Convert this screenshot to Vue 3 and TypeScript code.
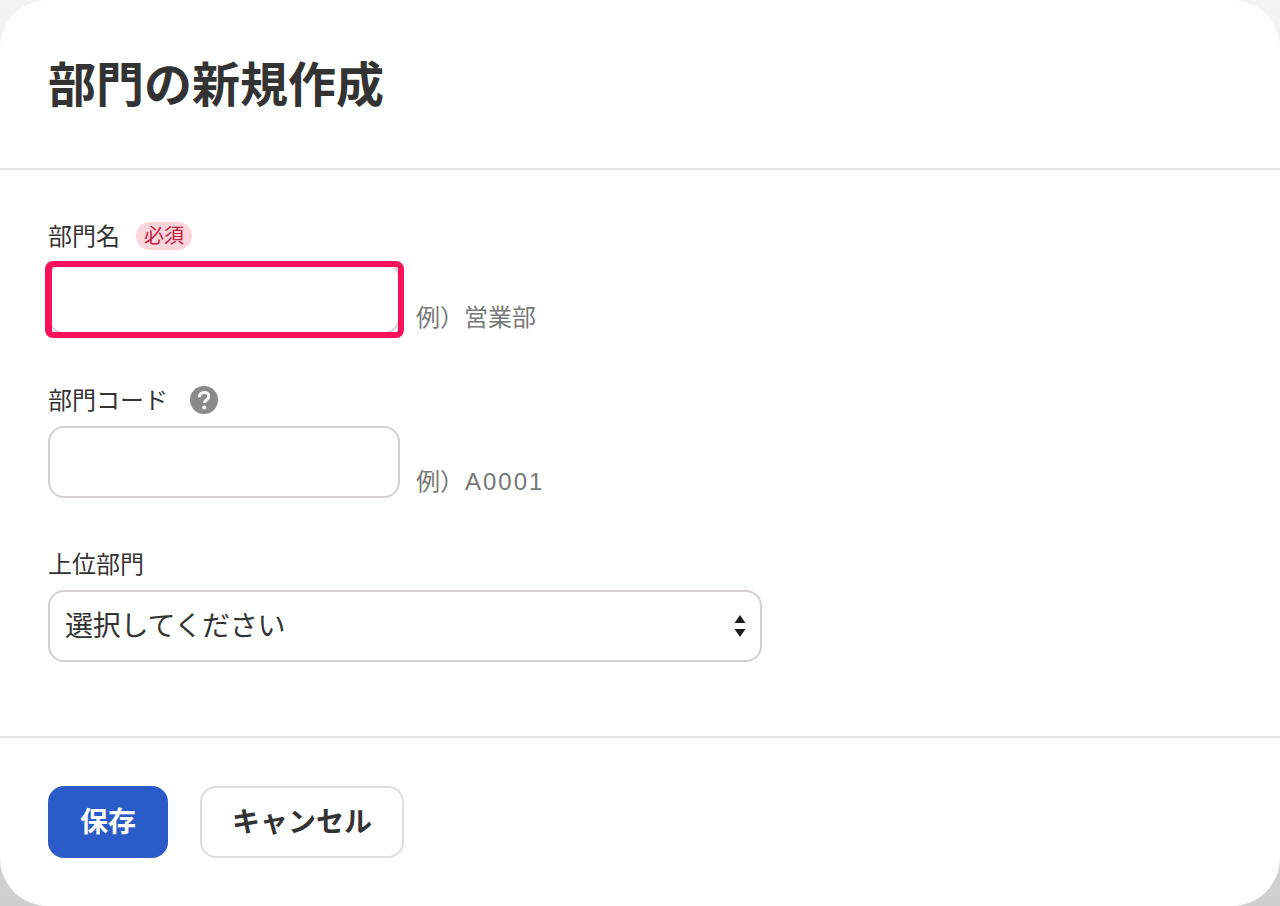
<script setup lang="ts">
const title: string = '部門の新規作成'
</script>

<template>
  <div class="backdrop">
    <div class="dialog">
      <header class="head">
        <h1 class="title">{{ title }}</h1>
      </header>
      <main class="body">
        <div class="field">
          <div class="label-row">
            <label class="label">部門名</label>
            <span class="badge">必須</span>
          </div>
          <div class="control-row">
            <span class="input-wrap focused">
              <input class="input" type="text" />
            </span>
            <span class="hint">例）営業部</span>
          </div>
        </div>
        <div class="field">
          <div class="label-row">
            <label class="label">部門コード</label>
            <svg class="help" viewBox="0 0 28 28" aria-hidden="true">
              <circle cx="14" cy="14" r="14" fill="#8a8a8a" />
              <path d="M9.400 11.200c0-2.800 1.900-4.600 4.700-4.600s4.600 1.600 4.600 3.900c0 1.800-1 2.700-2.300 3.600-1.300.9-1.800 1.500-1.800 3" fill="none" stroke="#fff" stroke-width="3" />
              <circle cx="14.200" cy="21.400" r="2" fill="#fff" />
            </svg>
          </div>
          <div class="control-row">
            <span class="input-wrap">
              <input class="input" type="text" />
            </span>
            <span class="hint">例）<span class="latin">A0001</span></span>
          </div>
        </div>
        <div class="field">
          <div class="label-row">
            <label class="label">上位部門</label>
          </div>
          <div class="select-wrap">
            <select class="select">
              <option>選択してください</option>
            </select>
            <svg class="arrows" viewBox="0 0 12 22" aria-hidden="true">
              <path d="M6 0l5.500 8H.5z M.5 14h11L6 22z" fill="#1a1a1a" />
            </svg>
          </div>
        </div>
      </main>
      <footer class="foot">
        <button class="btn primary" type="button">保存</button>
        <button class="btn secondary" type="button">キャンセル</button>
      </footer>
    </div>
  </div>
</template>

<style>
html,
body {
  margin: 0;
  padding: 0;
}
</style>

<style scoped>
.backdrop {
  width: 1280px;
  height: 906px;
  background: linear-gradient(180deg, #f3f3f3 0%, #cfcfcf 100%);
  font-family: "Liberation Sans", "Noto Sans CJK JP", sans-serif;
  color: #333;
}
.dialog {
  width: 1280px;
  height: 906px;
  background: #fff;
  border-radius: 48px;
  display: flex;
  flex-direction: column;
  box-sizing: border-box;
}
.head {
  height: 170px;
  box-sizing: border-box;
  border-bottom: 2px solid #e6e6e6;
  padding: 50px 48px 0;
}
.title {
  margin: 0;
  font-size: 48px;
  line-height: 72px;
  font-weight: 700;
  color: #333;
}
.body {
  height: 568px;
  box-sizing: border-box;
  border-bottom: 2px solid #e6e6e6;
  padding: 48px 48px 0;
  display: flex;
  flex-direction: column;
  gap: 48px;
}
.field {
  display: flex;
  flex-direction: column;
  gap: 8px;
}
.label-row {
  display: flex;
  align-items: center;
  height: 36px;
}
.label {
  font-size: 24px;
  line-height: 36px;
  margin-top: 2px;
}
.badge {
  margin-left: 16px;
  width: 56px;
  height: 28px;
  border-radius: 14px;
  background: #fdd5db;
  color: #c0213f;
  font-size: 20px;
  line-height: 28px;
  text-align: center;
}
.help {
  margin-left: 22px;
  width: 28px;
  height: 28px;
}
.control-row {
  display: flex;
  align-items: flex-end;
  gap: 16px;
}
.input-wrap {
  position: relative;
  display: flex;
}
.input-wrap.focused::after {
  content: "";
  position: absolute;
  top: -1px;
  left: -3px;
  right: -4px;
  bottom: -4px;
  border: solid #ff105a;
  border-width: 6px 6px 6px 7px;
  border-radius: 8px;
  pointer-events: none;
}
.input {
  width: 352px;
  height: 72px;
  box-sizing: border-box;
  border: 2px solid #d5d0d0;
  border-radius: 16px;
  background: #fff;
  padding: 0 16px;
  margin: 0;
  font-size: 28px;
}
.hint {
  font-size: 24px;
  line-height: 36px;
  color: #777;
  margin-bottom: -2px;
}
.latin {
  letter-spacing: 2px;
  margin-left: 1px;
}
.select-wrap {
  position: relative;
  width: 714px;
  height: 72px;
}
.select {
  appearance: none;
  width: 100%;
  height: 100%;
  box-sizing: border-box;
  border: 2px solid #d5d0d0;
  border-radius: 16px;
  background: #fff;
  padding: 0 15px;
  margin: 0;
  font-family: inherit;
  font-size: 28px;
  letter-spacing: -0.25px;
  color: #333;
}
.arrows {
  position: absolute;
  right: 16px;
  top: 25px;
  width: 12px;
  height: 22px;
  pointer-events: none;
}
.foot {
  flex: 1;
  display: flex;
  gap: 32px;
  padding: 48px 48px 0;
  align-items: flex-start;
}
.btn {
  height: 72px;
  box-sizing: border-box;
  border-radius: 16px;
  padding: 0 32px 4px;
  margin: 0;
  font-family: inherit;
  font-size: 28px;
  font-weight: 700;
}
.primary {
  border: 0;
  background: #2a5bc9;
  color: #fff;
}
.secondary {
  border: 2px solid #ddd;
  background: #fff;
  color: #333;
  padding: 0 30px 4px;
}
</style>
